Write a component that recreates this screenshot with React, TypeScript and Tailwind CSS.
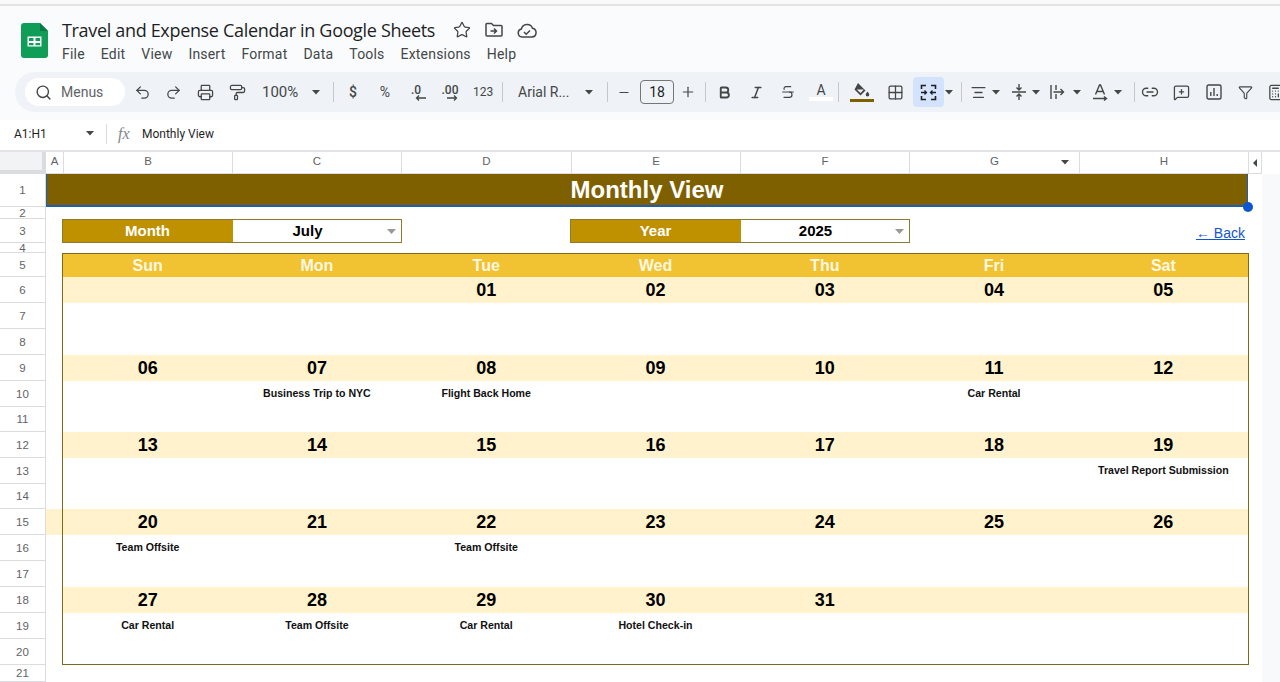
import type { ReactNode } from "react";
import {
  Search,
  Undo2,
  Redo2,
  Printer,
  PaintRoller,
  Star,
  Minus,
  Plus,
  Bold,
  Italic,
  Strikethrough,
  Grid2x2,
  Link2,
  MessageSquarePlus,
  Funnel,
  Calculator,
  AlignCenter,
} from "lucide-react";

const menus = ["File", "Edit", "View", "Insert", "Format", "Data", "Tools", "Extensions", "Help"];
const days = ["Sun", "Mon", "Tue", "Wed", "Thu", "Fri", "Sat"];

const rowHeaders = [
  { n: "1", h: "h-[33px]" },
  { n: "2", h: "h-[12px]" },
  { n: "3", h: "h-[24px]" },
  { n: "4", h: "h-[10px]" },
  { n: "5", h: "h-[24px]" },
  { n: "6", h: "h-[26px]" },
  { n: "7", h: "h-[26px]" },
  { n: "8", h: "h-[26px]" },
  { n: "9", h: "h-[26px]" },
  { n: "10", h: "h-[26px]" },
  { n: "11", h: "h-[25px]" },
  { n: "12", h: "h-[26px]" },
  { n: "13", h: "h-[26px]" },
  { n: "14", h: "h-[25px]" },
  { n: "15", h: "h-[26px]" },
  { n: "16", h: "h-[26px]" },
  { n: "17", h: "h-[26px]" },
  { n: "18", h: "h-[26px]" },
  { n: "19", h: "h-[26px]" },
  { n: "20", h: "h-[26px]" },
  { n: "21", h: "h-[17px]" },
];

const weeks: { dates: string[]; events: string[]; tail: string }[] = [
  { dates: ["", "", "01", "02", "03", "04", "05"], events: ["", "", "", "", "", "", ""], tail: "h-[26px]" },
  {
    dates: ["06", "07", "08", "09", "10", "11", "12"],
    events: ["", "Business Trip to NYC", "Flight Back Home", "", "", "Car Rental", ""],
    tail: "h-[25px]",
  },
  {
    dates: ["13", "14", "15", "16", "17", "18", "19"],
    events: ["", "", "", "", "", "", "Travel Report Submission"],
    tail: "h-[25px]",
  },
  {
    dates: ["20", "21", "22", "23", "24", "25", "26"],
    events: ["Team Offsite", "", "Team Offsite", "", "", "", ""],
    tail: "h-[26px]",
  },
  {
    dates: ["27", "28", "29", "30", "31", "", ""],
    events: ["Car Rental", "Team Offsite", "Car Rental", "Hotel Check-in", "", "", ""],
    tail: "h-[25px]",
  },
];

const Slot = ({ w, children }: { w: string; children?: ReactNode }) => (
  <div className={`${w} shrink-0 flex items-center justify-center`}>{children}</div>
);

const Caret = ({ w }: { w: string }) => (
  <Slot w={w}>
    <svg width="8" height="5" viewBox="0 0 8 5" className="shrink-0">
      <path d="M0 0h8L4 4.5z" fill="#444746" />
    </svg>
  </Slot>
);

const Sep = ({ w }: { w: string }) => (
  <Slot w={w}>
    <div className="w-px h-[20px] bg-[#c7c7c7] shrink-0" />
  </Slot>
);

const iconProps = { size: 17, color: "#444746", strokeWidth: 1.8 };

const Toolbar = () => (
  <div className="ml-[15px] h-[40px] rounded-l-[20px] bg-[#eff3f8] flex items-center pl-[10px] overflow-hidden text-[#444746] font-['Roboto',sans-serif]">
    <div className="w-[100px] h-[28px] shrink-0 rounded-full bg-white flex items-center pl-[10px] gap-[9px]">
      <Search size={17} color="#444746" strokeWidth={2} />
      <span className="text-[14px] text-[#5f6368]">Menus</span>
    </div>
    <Slot w="w-[2px]" />
    <Slot w="w-[31px]"><Undo2 {...iconProps} /></Slot>
    <Slot w="w-[31px]"><Redo2 {...iconProps} /></Slot>
    <Slot w="w-[33px]"><Printer {...iconProps} /></Slot>
    <Slot w="w-[30px]"><PaintRoller {...iconProps} /></Slot>
    <div className="w-[54px] shrink-0 pl-[10px] text-[15px]">100%</div>
    <Caret w="w-[20px]" />
    <Sep w="w-[15px]" />
    <Slot w="w-[24px]"><span className="text-[14px] font-medium">$</span></Slot>
    <Slot w="w-[40px]"><span className="text-[14px]">%</span></Slot>
    <Slot w="w-[22px]">
      <div className="relative text-[12px] font-medium leading-none -mt-[4px]">
        .0
        <svg width="11" height="6" viewBox="0 0 11 6" className="absolute left-[4px] top-[11px]">
          <path d="M11 3H2M4 .5 1.5 3 4 5.500" stroke="#444746" strokeWidth="1.3" fill="none" />
        </svg>
      </div>
    </Slot>
    <Slot w="w-[46px]">
      <div className="relative text-[12px] font-medium leading-none -mt-[4px]">
        .00
        <svg width="11" height="6" viewBox="0 0 11 6" className="absolute left-[5px] top-[11px]">
          <path d="M0 3h9M7 .5 9.500 3 7 5.500" stroke="#444746" strokeWidth="1.3" fill="none" />
        </svg>
      </div>
    </Slot>
    <Slot w="w-[20px]"><span className="text-[12px]">123</span></Slot>
    <Sep w="w-[18px]" />
    <div className="w-[70px] shrink-0 pl-[7px] text-[14px]">Arial R...</div>
    <Caret w="w-[16px]" />
    <Sep w="w-[20px]" />
    <Slot w="w-[14px]"><Minus size={15} color="#444746" strokeWidth={1.8} /></Slot>
    <Slot w="w-[9px]" />
    <div className="w-[34px] h-[24px] shrink-0 rounded-[4px] border border-[#747775] flex items-center justify-center text-[14px] text-[#1f1f1f]">18</div>
    <Slot w="w-[28px]"><Plus size={16} color="#444746" strokeWidth={1.8} /></Slot>
    <Sep w="w-[6px]" />
    <Slot w="w-[32px]"><Bold size={15} color="#444746" strokeWidth={3} /></Slot>
    <Slot w="w-[32px]"><Italic size={15} color="#444746" strokeWidth={2.4} /></Slot>
    <Slot w="w-[32px]"><Strikethrough size={16} color="#444746" strokeWidth={1.8} /></Slot>
    <Slot w="w-[34px]">
      <div className="flex flex-col items-center">
        <span className="text-[14px] leading-[14px]">A</span>
        <div className="w-[24px] h-[4px] bg-white" />
      </div>
    </Slot>
    <Sep w="w-px" />
    <Slot w="w-[46px]">
      <div className="flex flex-col items-center gap-[1px]">
        <svg width="18" height="16" viewBox="0 0 18 16">
          <path d="M5 1l7.500 7.500-5 5L1.500 7.500z M3.800 7.500h7l-3.300 3.500z" fill="#444746" fillRule="evenodd" />
          <path d="M14.500 9.500c1 1.500 1.800 2.400 1.800 3.300a1.800 1.800 0 0 1-3.600 0c0-.9.800-1.800 1.800-3.300z" fill="#444746" />
        </svg>
        <div className="w-[24px] h-[3px] bg-[#7f6000]" />
      </div>
    </Slot>
    <Slot w="w-[20px]"><Grid2x2 {...iconProps} /></Slot>
    <Slot w="w-[8px]" />
    <div className="w-[31px] h-[30px] shrink-0 rounded-[4px] bg-[#d3e3fd] flex items-center justify-center">
      <svg width="17" height="17" viewBox="0 0 17 17" fill="none" stroke="#1f1f1f" strokeWidth="1.6">
        <path d="M6 1.500H1.500V5M11 1.500h4.500V5M6 15.500H1.500V12M11 15.500h4.500V12" />
        <path d="M1 8.500h5M4.500 6.500l2 2-2 2M16 8.500h-5M12.500 6.500l-2 2 2 2" strokeWidth="1.3" />
      </svg>
    </div>
    <Caret w="w-[10px]" />
    <Sep w="w-[14px]" />
    <Slot w="w-[20px]"><AlignCenter {...iconProps} /></Slot>
    <Caret w="w-[16px]" />
    <Slot w="w-px" />
    <Slot w="w-[28px]">
      <svg width="14" height="16" viewBox="0 0 14 16" fill="none" stroke="#444746" strokeWidth="1.4">
        <path d="M0 8h14" />
        <path d="M7 0v5M4.500 3.500 7 6l2.500-2.500M7 16v-5M4.500 12.500 7 10l2.500 2.500" />
      </svg>
    </Slot>
    <Caret w="w-[6px]" />
    <Slot w="w-[4px]" />
    <Slot w="w-[30px]">
      <svg width="16" height="14" viewBox="0 0 16 14" fill="none" stroke="#444746" strokeWidth="1.4">
        <path d="M1 0v14M6 0v5M6 9v5M3.500 7h10M10.500 4l3 3-3 3" />
      </svg>
    </Slot>
    <Caret w="w-[8px]" />
    <Slot w="w-[4px]" />
    <Slot w="w-[30px]">
      <svg width="15" height="17" viewBox="0 0 15 17" fill="none" stroke="#444746" strokeWidth="1.4">
        <path d="M2.500 10.500 6.500 1h1l4 9.500M4 7.500h6" />
        <path d="M0 14.500h13M11 12.500l2.500 2-2.500 2" />
      </svg>
    </Slot>
    <Caret w="w-[6px]" />
    <Slot w="w-[13px]" />
    <div className="w-px h-[20px] bg-[#c7c7c7] shrink-0" />
    <Slot w="w-[30px]"><Link2 size={18} color="#444746" strokeWidth={1.8} /></Slot>
    <Slot w="w-[32px]"><MessageSquarePlus {...iconProps} /></Slot>
    <Slot w="w-[34px]">
      <svg width="16" height="16" viewBox="0 0 16 16" fill="none" stroke="#444746" strokeWidth="1.4">
        <rect x="1" y="1" width="14" height="14" rx="1.500" />
        <path d="M4.800 8v4M8 4v8M11.200 10v2" />
      </svg>
    </Slot>
    <Slot w="w-[28px]"><Funnel size={15} color="#444746" strokeWidth={1.8} /></Slot>
    <Slot w="w-[32px]"><Calculator {...iconProps} /></Slot>
  </div>
);

const Header = () => (
  <div className="bg-[#f9fbfd] shrink-0">
    <div className="h-[6px] bg-[#fafafa] border-b-2 border-[#e3e3e3]" />
    <div className="h-[66px] flex pl-[21px]">
      <svg width="27" height="35" viewBox="0 0 27 35" className="mt-[17px] shrink-0">
        <path d="M3 0h16l8 8v24a3 3 0 0 1-3 3H3a3 3 0 0 1-3-3V3a3 3 0 0 1 3-3z" fill="#0f9d58" />
        <path d="M19 0l8 8h-8z" fill="#0a7a43" />
        <path d="M6.500 13.500h14v10h-14z M8 15v3h4.500v-3z M14.500 15v3H19v-3z M8 20v2.200h4.500V20z M14.500 20v2.200H19V20z" fill="#fff" fillRule="evenodd" />
      </svg>
      <div className="ml-[14px] flex flex-col">
        <div className="mt-[10px] h-[28px] flex items-center">
          <span className="text-[18px] text-[#1f1f1f] font-['Open_Sans',sans-serif] tracking-[-0.33px]">
            Travel and Expense Calendar in Google Sheets
          </span>
          <Star size={18} color="#444746" strokeWidth={1.7} className="ml-[18px]" />
          <svg width="18" height="16" viewBox="0 0 18 16" fill="none" stroke="#444746" strokeWidth="1.5" className="ml-[14px]">
            <path d="M1 2.500a1 1 0 0 1 1-1h4.500l2 2H16a1 1 0 0 1 1 1V13a1 1 0 0 1-1 1H2a1 1 0 0 1-1-1z" />
            <path d="M5.500 9h6M9 6.500 11.500 9 9 11.500" />
          </svg>
          <svg width="20" height="15" viewBox="0 0 20 15" fill="none" stroke="#444746" strokeWidth="1.500" className="ml-[14px]">
            <path d="M5 14a4 4 0 0 1-.6-7.900A5.800 5.800 0 0 1 15.500 5.300 4.400 4.400 0 0 1 15 14z" />
            <path d="M7 9l2.200 2.200L13 7.500" />
          </svg>
        </div>
        <div className="flex gap-[16px] text-[14px] tracking-[0.2px] leading-[20px] text-[#444746] font-['Roboto',sans-serif]">
          {menus.map((m) => (
            <span key={m}>{m}</span>
          ))}
        </div>
      </div>
    </div>
    <Toolbar />
    <div className="h-[8px]" />
    <div className="h-[30px] pb-[3px] bg-white flex items-center font-['Roboto',sans-serif] text-[12px] text-[#1f1f1f]">
      <span className="w-[86px] pl-[14px]">A1:H1</span>
      <Caret w="w-[8px]" />
      <div className="ml-[12px] w-px h-[20px] bg-[#dadce0]" />
      <span className="ml-[11px] w-[24px] font-['Liberation_Serif',serif] italic text-[16px] text-[#80868b]">fx</span>
      <span>Monthly View</span>
    </div>
  </div>
);

const ColumnHeaders = () => {
  const cols = [
    { l: "B", w: "w-[169px]" },
    { l: "C", w: "w-[169px]" },
    { l: "D", w: "w-[170px]" },
    { l: "E", w: "w-[169px]" },
    { l: "F", w: "w-[169px]" },
    { l: "G", w: "w-[170px]" },
    { l: "H", w: "w-[169px]" },
  ];
  return (
    <div className="h-[24px] pb-0 shrink-0 flex bg-white border-t-2 border-[#e1e3e6] text-[11.5px] text-[#5f6368] font-['Liberation_Sans',sans-serif]">
      <div className="w-[46px] bg-[#f1f3f4] border-r-4 border-b-4 border-[#dadce0]" />
      <div className="w-[18px] pb-[2px] border-r border-b border-[#dadce0] flex items-center justify-center">A</div>
      {cols.map((c) => (
        <div key={c.l} className={`${c.w} pb-[2px] relative border-r border-b border-[#dadce0] flex items-center justify-center`}>
          {c.l}
          {c.l === "G" && (
            <svg width="8" height="5" viewBox="0 0 8 5" className="absolute right-[10px] top-[8px]">
              <path d="M0 0h8L4 4.500z" fill="#444746" />
            </svg>
          )}
        </div>
      ))}
      <div className="w-[13px] border-r border-b border-[#dadce0] flex items-center justify-center">
        <svg width="4" height="8" viewBox="0 0 4 8">
          <path d="M4 0v8L0 4z" fill="#444746" />
        </svg>
      </div>
    </div>
  );
};

const Selector = ({ label, value }: { label: string; value: string }) => (
  <div className="w-[340px] h-[24px] flex border border-[#8c7a2e] text-[15px] font-bold">
    <div className="w-[170px] pt-px pr-px bg-[#bf9000] text-white flex items-center justify-center">{label}</div>
    <div className="flex-1 pt-px relative flex items-center justify-center pr-[19px] text-black">
      {value}
      <svg width="9" height="5" viewBox="0 0 9 5" className="absolute right-[5px] top-[9px]">
        <path d="M0 0h9L4.500 5z" fill="#999" />
      </svg>
    </div>
  </div>
);

const Calendar = () => (
  <div className="ml-[16px] w-[1187px] border border-[#7f6a1c] font-['Liberation_Sans',sans-serif]">
    <div className="h-[23px] grid grid-cols-7 bg-[#f1c232]">
      {days.map((d) => (
        <div key={d} className="flex items-center justify-center text-[16px] font-bold text-[#fff8e1]">
          {d}
        </div>
      ))}
    </div>
    {weeks.map((week, i) => (
      <div key={i}>
        <div className="relative h-[26px] grid grid-cols-7 bg-[#fff2cc]">
          {i === 3 && <div className="absolute -left-[17px] top-0 w-[16px] h-[26px] bg-[#fff2cc]" />}
          {week.dates.map((d, j) => (
            <div key={j} className="flex items-center justify-center text-[18px] font-bold text-black">
              {d}
            </div>
          ))}
        </div>
        <div className="h-[26px] grid grid-cols-7">
          {week.events.map((e, j) => (
            <div key={j} className="pb-[1px] flex items-center justify-center text-[10.6px] font-bold text-[#111]">
              {e}
            </div>
          ))}
        </div>
        <div className={week.tail} />
      </div>
    ))}
  </div>
);

const Sheet = () => (
  <div className="flex flex-1 min-h-0 bg-white">
    <div className="w-[46px] shrink-0 font-['Liberation_Sans',sans-serif] text-[11.5px] text-[#5f6368] border-r border-[#dadce0]">
      {rowHeaders.map((r) => (
        <div key={r.n} className={`${r.h} pt-[2px] flex items-center justify-center border-b border-[#dadce0] overflow-hidden`}>
          {r.n}
        </div>
      ))}
    </div>
    <div className="w-[1202px] shrink-0 flex flex-col">
      <div className="relative h-[33px] pt-px bg-[#7f6000] border-b-2 border-x border-[#1a5fb4] flex items-center justify-center text-[24px] font-bold text-white font-['Liberation_Sans',sans-serif]">
        Monthly View
        <div className="absolute -right-[6px] -bottom-[7px] w-[10px] h-[10px] rounded-full bg-[#0b57d0]" />
      </div>
      <div className="mt-[12px] mb-[10px] ml-[16px] flex font-['Liberation_Sans',sans-serif]">
        <Selector label="Month" value="July" />
        <div className="w-[168px]" />
        <Selector label="Year" value="2025" />
        <div className="flex-1 flex justify-end items-end pr-[3px] pb-[1px]">
          <a className="text-[14px] leading-[18px] text-[#1155cc] underline">← Back</a>
        </div>
      </div>
      <Calendar />
    </div>
    <div className="w-[14px] shrink-0" />
    <div className="flex-1 bg-[#f8f9fa]" />
  </div>
);

const App = () => (
  <div className="w-[1280px] h-[682px] overflow-hidden flex flex-col bg-white">
    <Header />
    <ColumnHeaders />
    <Sheet />
  </div>
);

export default App;
